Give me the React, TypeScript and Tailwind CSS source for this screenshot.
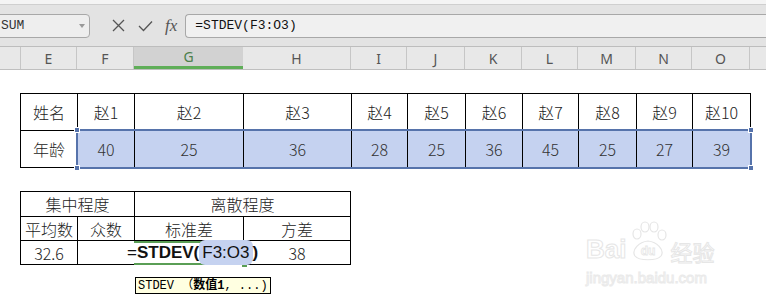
import React from 'react';

const cols = [
  { key: 'D', w: 21 },
  { key: 'E', w: 56 },
  { key: 'F', w: 57 },
  { key: 'G', w: 109 },
  { key: 'H', w: 108 },
  { key: 'I', w: 56 },
  { key: 'J', w: 58 },
  { key: 'K', w: 57 },
  { key: 'L', w: 56 },
  { key: 'M', w: 58 },
  { key: 'N', w: 56 },
  { key: 'O', w: 58 },
  { key: 'P', w: 40 },
];

const names = ['赵1', '赵2', '赵3', '赵4', '赵5', '赵6', '赵7', '赵8', '赵9', '赵10'];
const ages = [40, 25, 36, 28, 25, 36, 45, 25, 27, 39];
const widths = [57, 57, 109, 108, 56, 58, 57, 56, 58, 56, 58];

const cellFont = "font-['Century_Gothic','Noto_Sans_CJK_SC',sans-serif] font-light";

const App = () => {
  return (
    <div className="w-[766px] h-[306px] overflow-hidden bg-white relative font-['Noto_Sans','Noto_Sans_CJK_SC',sans-serif]">
      {/* toolbar strip above */}
      <div className="h-[5px] bg-[#f4f4f4] border-b border-[#cfcfcf]" />

      {/* formula bar */}
      <div className="h-[42px] bg-[#e3e3e3] flex items-center border-b border-[#bdbdbd]">
        <div className="ml-[-6px] w-[96px] h-[24px] bg-[#eeeeee] border border-[#a8a8a8] rounded-[4px] flex items-center justify-between pl-[6px] pr-[4px]">
          <span className="font-['Liberation_Mono',monospace] text-[13px] text-[#333]">SUM</span>
          <span className="w-0 h-0 border-l-[3px] border-r-[3px] border-t-[4px] border-l-transparent border-r-transparent border-t-[#999]" />
        </div>
        <svg className="ml-[22px]" width="13" height="13" viewBox="0 0 13 13">
          <path d="M1 1L12 12M12 1L1 12" stroke="#555" strokeWidth="1.3" fill="none" />
        </svg>
        <svg className="ml-[13px]" width="15" height="12" viewBox="0 0 15 12">
          <path d="M1 6L5.5 10.5L14 1.5" stroke="#555" strokeWidth="1.3" fill="none" />
        </svg>
        <span className="ml-[12px] font-['Liberation_Serif',serif] italic text-[17px] text-[#555] leading-none">fx</span>
        <div className="ml-[8px] flex-1 h-[24px] bg-[#f0f0f0] border border-[#a8a8a8] border-r-0 rounded-l-[4px] flex items-center pl-[9px]">
          <span className="font-['Liberation_Mono','Noto_Sans_CJK_SC',monospace] text-[13px] text-[#111]">=STDEV(F3:O3)</span>
        </div>
      </div>

      {/* column headers */}
      <div className="flex h-[23px] bg-[#e8e8e8] border-b border-[#bfbfbf]">
        {cols.map((c) => (
          <div
            key={c.key}
            style={{ width: c.w }}
            className={
              c.key === 'G'
                ? 'shrink-0 flex items-center justify-center bg-[#d2d2d2] border-b-[3px] border-[#5fae58] text-[#4b7f4a] text-[14px]'
                : 'shrink-0 flex items-center justify-center border-r border-[#c6c6c6] text-[#555] text-[14px]'
            }
          >
            {c.key === 'D' || c.key === 'P' ? '' : c.key}
          </div>
        ))}
      </div>

      {/* sheet */}
      <div className="pl-[20px] pt-[23px]">
        <div className="relative w-fit">
          <table className={`w-[730px] border-collapse table-fixed text-[16px] text-[#222] ${cellFont}`}>
            <colgroup>
              {widths.map((w, i) => (
                <col key={i} style={{ width: w }} />
              ))}
            </colgroup>
            <tbody>
              <tr className="h-[37px]">
                <td className="border border-black text-center">姓名</td>
                {names.map((n) => (
                  <td key={n} className="border border-black text-center">{n}</td>
                ))}
              </tr>
              <tr className="h-[37px]">
                <td className="border border-black text-center">年龄</td>
                {ages.map((a, i) => (
                  <td key={i} className="border border-black bg-[#c5d2f0] text-center text-[#333]">{a}</td>
                ))}
              </tr>
            </tbody>
          </table>
          {/* selection frame */}
          <div className="absolute left-[56px] right-[-1px] top-[36px] bottom-[-1px] border-2 border-[#5673ab] pointer-events-none">
            <div className="absolute left-[-4px] top-[-4px] w-[6px] h-[6px] bg-[#5673ab] border border-white" />
            <div className="absolute left-[-4px] bottom-[-4px] w-[6px] h-[6px] bg-[#5673ab] border border-white" />
            <div className="absolute right-[-4px] top-[-4px] w-[6px] h-[6px] bg-[#5673ab] border border-white" />
            <div className="absolute right-[-4px] bottom-[-4px] w-[6px] h-[6px] bg-[#5673ab] border border-white" />
          </div>
        </div>

        <table className={`mt-[23px] w-[330px] border-collapse table-fixed text-[16px] text-[#222] ${cellFont}`}>
          <colgroup>
            <col style={{ width: 57 }} />
            <col style={{ width: 57 }} />
            <col style={{ width: 109 }} />
            <col style={{ width: 107 }} />
          </colgroup>
          <tbody>
            <tr className="h-[25px]">
              <td colSpan={2} className="border border-black text-center leading-none">集中程度</td>
              <td colSpan={2} className="border border-black text-center leading-none">离散程度</td>
            </tr>
            <tr className="h-[24px]">
              <td className="border border-black text-center leading-none">平均数</td>
              <td className="border border-black text-center leading-none">众数</td>
              <td className="border border-black text-center leading-none">标准差</td>
              <td className="border border-black text-center leading-none">方差</td>
            </tr>
            <tr className="h-[24px]">
              <td className="border border-black text-center leading-none">32.6</td>
              <td colSpan={2} className="border border-black p-0">
                <div className="relative h-[22px]">
                  <div className="absolute left-[56px] top-[-1px] w-[110px] h-[24px] border-y-2 border-[#5a9e55]">
                    <div className="absolute right-[-3px] bottom-[-4px] w-[5px] h-[5px] bg-[#5a9e55]" />
                  </div>
                  <div className="relative flex items-center h-full pl-[49px] whitespace-nowrap text-[17px] text-[#111] font-normal font-['Liberation_Sans',sans-serif]">
                    <span>=</span>
                    <span className="font-bold">STDEV(</span>
                    <span className="bg-[#c5d2f0] rounded-[6px] px-[3px]">F3:O3</span>
                    <span className="font-bold">)</span>
                  </div>
                </div>
              </td>
              <td className="border border-black text-center leading-none">38</td>
            </tr>
          </tbody>
        </table>

        {/* function tooltip */}
        <div className="ml-[115px] mt-[12px] w-fit h-[17px] px-[2px] bg-[#ffffe1] border border-black flex items-center text-[12px] text-black font-['Liberation_Mono','Noto_Sans_CJK_SC',monospace] leading-none">
          <span>STDEV （</span>
          <span className="font-bold">数值1</span>
          <span>, ...)</span>
        </div>
      </div>

      {/* watermark */}
      <div className="absolute left-[586px] top-[220px] w-[140px] pointer-events-none select-none">
        <div className="flex items-end">
          <span className="text-[26px] font-bold leading-none text-white [-webkit-text-stroke:1px_#e6e6e6] font-['Liberation_Sans',sans-serif]">Bai</span>
          <svg width="42" height="42" viewBox="0 0 42 42" className="mx-[1px]">
            <g fill="none" stroke="#e6e6e6" strokeWidth="1.2">
              <ellipse cx="10" cy="14" rx="4" ry="5" />
              <ellipse cx="18" cy="7" rx="4" ry="5" />
              <ellipse cx="27" cy="7" rx="4" ry="5" />
              <ellipse cx="35" cy="15" rx="4" ry="5" />
              <path d="M8 36C4 30 12 22 21 21C30 22 38 30 34 36C30 41 12 41 8 36Z" />
            </g>
            <text x="21" y="35" textAnchor="middle" fontSize="12" fontWeight="bold" fill="white" stroke="#e6e6e6" strokeWidth="0.8" fontFamily="Liberation Sans">du</text>
          </svg>
          <span className="text-[22px] leading-none text-white [-webkit-text-stroke:1px_#e6e6e6] font-['Noto_Sans_CJK_SC',sans-serif]">经验</span>
        </div>
        <div className="mt-[8px] text-[15px] leading-none text-white [-webkit-text-stroke:1px_#eaeaea] font-['Liberation_Sans',sans-serif]">jingyan.baidu.com</div>
      </div>
    </div>
  );
};

export default App;
